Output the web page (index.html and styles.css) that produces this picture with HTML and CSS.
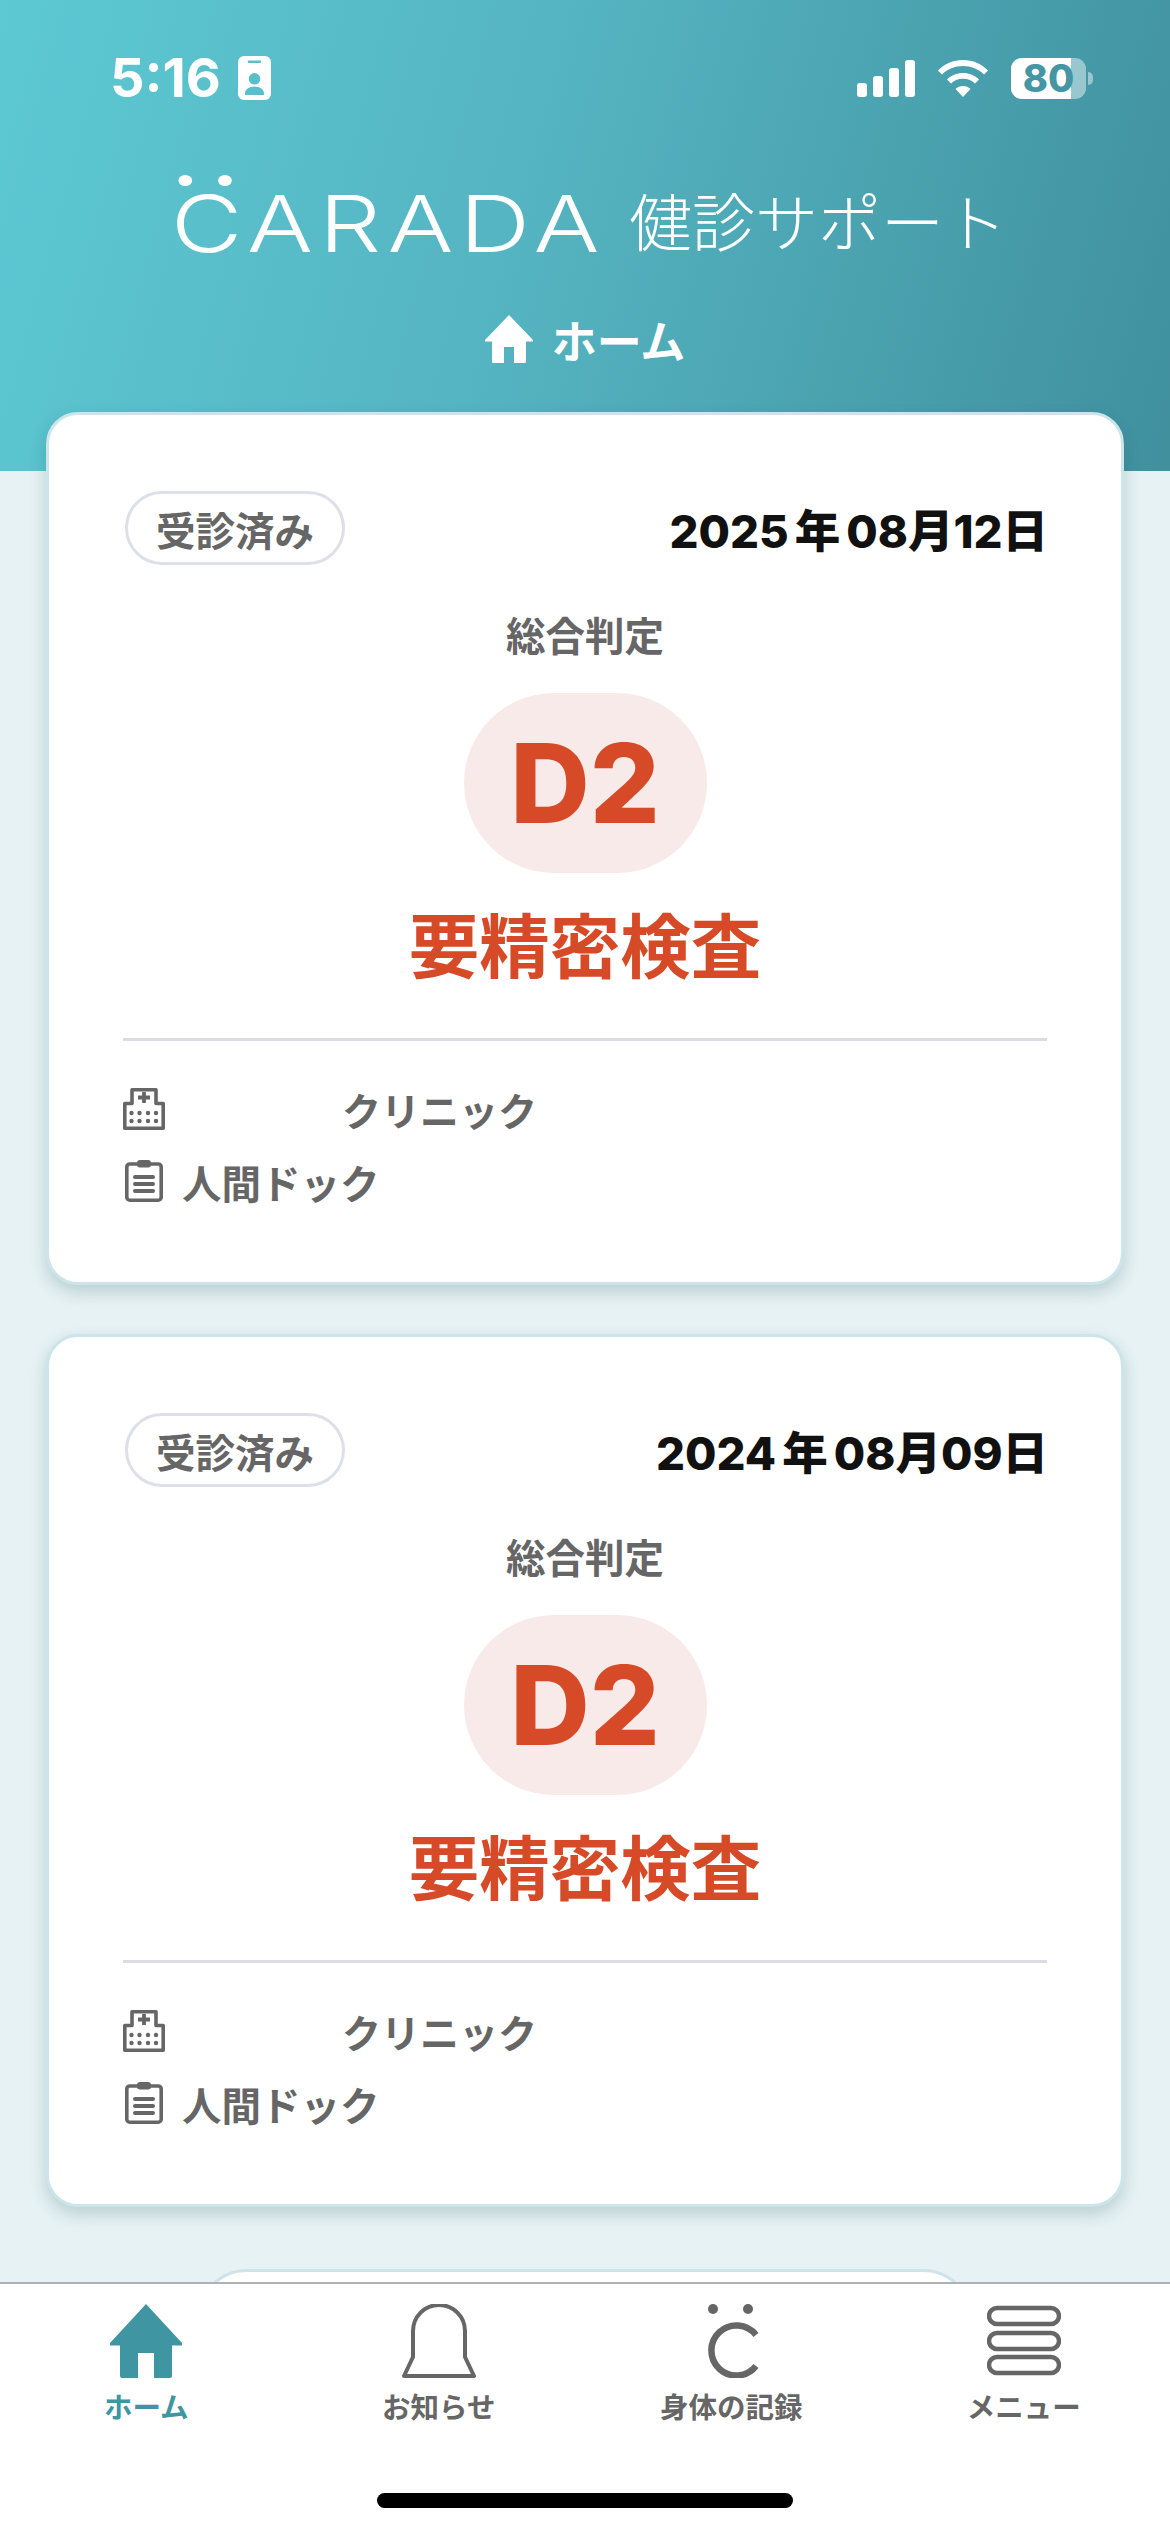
FILE: index.html
```html
<!DOCTYPE html>
<html lang="ja">
<head>
    <meta charset="UTF-8">
    <meta name="viewport" content="width=device-width, initial-scale=1.0">
    <title>CARADA 健診サポート</title>
    <link rel="stylesheet" href="styles.css">
</head>
<body>
    <header class="top">
        <div class="status">
            <div class="status-left">
                <span class="time">5:16</span>
                <svg class="id-icon" viewBox="0 0 33 44">
                    <path fill="#fff" fill-rule="evenodd" d="M6 0H27A6 6 0 0 1 33 6V38A6 6 0 0 1 27 44H6A6 6 0 0 1 0 38V6A6 6 0 0 1 6 0ZM11 4.500A1.200 1.200 0 0 0 11 7H22A1.200 1.200 0 0 0 22 4.500ZM16.500 17A5.800 5.800 0 1 0 16.500 28.600A5.800 5.800 0 1 0 16.500 17ZM16.500 30.500C11 30.500 7 33.500 7 37.500V39H26V37.500C26 33.500 22 30.500 16.500 30.500Z"/>
                </svg>
            </div>
            <div class="status-right">
                <svg class="signal" viewBox="0 0 58 37">
                    <rect x="0" y="23" width="10" height="14" rx="3" fill="#fff"/>
                    <rect x="16" y="16" width="10" height="21" rx="3" fill="#fff"/>
                    <rect x="32" y="8" width="10" height="29" rx="3" fill="#fff"/>
                    <rect x="48" y="0" width="10" height="37" rx="3" fill="#fff"/>
                </svg>
                <svg class="wifi" viewBox="0 0 50 37">
                    <path fill="#fff" d="M25 0C35 0 43.500 4 50 10.500L46 14.500C40.500 9 33 6 25 6S9.500 9 4 14.500L0 10.500C6.500 4 15 0 25 0Z"/>
                    <path fill="#fff" d="M25 13C31.500 13 37 15.500 41 19.500L37 23.500C34 20.500 30 18.800 25 18.800S16 20.500 13 23.500L9 19.500C13 15.500 18.500 13 25 13Z"/>
                    <path fill="#fff" d="M25 26C28 26 30.500 27 32.500 29L25 37L17.500 29C19.500 27 22 26 25 26Z"/>
                </svg>
                <div class="battery">
                    <div class="battery-body">
                        <div class="battery-fill"></div>
                        <span class="battery-num">80</span>
                    </div>
                    <span class="battery-tip"></span>
                </div>
            </div>
        </div>
        <div class="logo-row">
            <span class="logo"><span class="logo-dots"></span>CARADA</span>
            <span class="logo-sub">健診サポート</span>
        </div>
        <div class="page-title">
            <svg class="title-home" viewBox="0 0 48 48">
                <path fill="#fff" d="M24 0L48 25V26.500H41V47A1 1 0 0 1 40 48H29V32H19V48H8A1 1 0 0 1 7 47V26.500H0V25Z"/>
            </svg>
            <span>ホーム</span>
        </div>
    </header>

    <main class="list">
        <section class="card">
            <div class="card-head">
                <span class="pill">受診済み</span>
                <span class="date">2025<span class="unit">年</span>08月12日</span>
            </div>
            <div class="judge-label">総合判定</div>
            <div class="grade">D2</div>
            <div class="judge">要精密検査</div>
            <hr class="line">
            <div class="info">
                <svg class="ico-hospital" viewBox="0 0 42 42">
                    <path fill="none" stroke="#666" stroke-width="3.600" stroke-linejoin="round" d="M9 15.500V1.800H33V15.500H40.200V40.200H1.800V15.500Z"/>
                    <path fill="none" stroke="#666" stroke-width="3.800" d="M15 9.500H27M21 4V15"/>
                    <g fill="#666">
                        <circle cx="8.500" cy="25" r="2.200"/><circle cx="16.500" cy="25" r="2.200"/><circle cx="25" cy="25" r="2.200"/><circle cx="33" cy="25" r="2.200"/>
                        <circle cx="8.500" cy="33" r="2.200"/><circle cx="16.500" cy="33" r="2.200"/><circle cx="25" cy="33" r="2.200"/><circle cx="33" cy="33" r="2.200"/>
                    </g>
                </svg>
                <span class="masked"></span>
                <span class="clinic">クリニック</span>
            </div>
            <div class="info info-next">
                <svg class="ico-clip" viewBox="0 0 38 42">
                    <rect x="1.800" y="4" width="34.400" height="36.200" rx="3" fill="none" stroke="#666" stroke-width="3.600"/>
                    <rect x="12" y="0" width="14" height="7.500" rx="3" fill="#666"/>
                    <path stroke="#666" stroke-width="4" stroke-linecap="round" d="M10 17H28M10 24H28M10 31H28"/>
                </svg>
                <span>人間ドック</span>
            </div>
        </section>

        <section class="card">
            <div class="card-head">
                <span class="pill">受診済み</span>
                <span class="date">2024<span class="unit">年</span>08月09日</span>
            </div>
            <div class="judge-label">総合判定</div>
            <div class="grade">D2</div>
            <div class="judge">要精密検査</div>
            <hr class="line">
            <div class="info">
                <svg class="ico-hospital" viewBox="0 0 42 42">
                    <path fill="none" stroke="#666" stroke-width="3.600" stroke-linejoin="round" d="M9 15.500V1.800H33V15.500H40.200V40.200H1.800V15.500Z"/>
                    <path fill="none" stroke="#666" stroke-width="3.800" d="M15 9.500H27M21 4V15"/>
                    <g fill="#666">
                        <circle cx="8.500" cy="25" r="2.200"/><circle cx="16.500" cy="25" r="2.200"/><circle cx="25" cy="25" r="2.200"/><circle cx="33" cy="25" r="2.200"/>
                        <circle cx="8.500" cy="33" r="2.200"/><circle cx="16.500" cy="33" r="2.200"/><circle cx="25" cy="33" r="2.200"/><circle cx="33" cy="33" r="2.200"/>
                    </g>
                </svg>
                <span class="masked"></span>
                <span class="clinic">クリニック</span>
            </div>
            <div class="info info-next">
                <svg class="ico-clip" viewBox="0 0 38 42">
                    <rect x="1.800" y="4" width="34.400" height="36.200" rx="3" fill="none" stroke="#666" stroke-width="3.600"/>
                    <rect x="12" y="0" width="14" height="7.500" rx="3" fill="#666"/>
                    <path stroke="#666" stroke-width="4" stroke-linecap="round" d="M10 17H28M10 24H28M10 31H28"/>
                </svg>
                <span>人間ドック</span>
            </div>
        </section>

        <div class="more"></div>
    </main>

    <nav class="tabs">
        <div class="tab tab-on">
            <svg class="tab-icon" viewBox="0 0 74 74">
                <path fill="#4095a3" d="M37 0L73 39V41.500H63V72A2 2 0 0 1 61 74H45V49H29V74H13A2 2 0 0 1 11 72V41.500H1V39Z"/>
            </svg>
            <span>ホーム</span>
        </div>
        <div class="tab">
            <svg class="tab-icon" viewBox="0 0 74 74">
                <path fill="none" stroke="#666" stroke-width="4" stroke-linejoin="round" d="M11 53V27A26 26 0 0 1 63 27V53L72 72H2Z"/>
            </svg>
            <span>お知らせ</span>
        </div>
        <div class="tab">
            <svg class="tab-icon" viewBox="0 0 74 74">
                <circle cx="19" cy="5" r="5" fill="#666"/>
                <circle cx="54" cy="5" r="5" fill="#666"/>
                <path fill="none" stroke="#666" stroke-width="6.500" d="M62 31A25 25 0 1 0 62 62"/>
            </svg>
            <span>身体の記録</span>
        </div>
        <div class="tab">
            <svg class="tab-icon" viewBox="0 0 74 74">
                <g fill="none" stroke="#666" stroke-width="4.500">
                    <rect x="2" y="4" width="70" height="16" rx="8"/>
                    <rect x="2" y="29" width="70" height="16" rx="8"/>
                    <rect x="2" y="53" width="70" height="16" rx="8"/>
                </g>
            </svg>
            <span>メニュー</span>
        </div>
        <div class="home-bar"></div>
    </nav>
</body>
</html>
```

FILE: styles.css
```css
html, body {
    margin: 0;
    padding: 0;
}

body {
    width: 1170px;
    height: 2532px;
    overflow: hidden;
    position: relative;
    background-color: #e6f2f4;
    font-family: Inter, "Noto Sans CJK JP", sans-serif;
}

.top {
    height: 471px;
    box-sizing: border-box;
    padding-top: 50px;
    color: #fff;
    background: linear-gradient(105deg, #5cc9d3 0%, #55b4c1 45%, #40909e 100%);
}

.status {
    height: 56px;
    padding: 0 77px 0 110px;
    display: flex;
    justify-content: space-between;
    align-items: center;
}

.status-left {
    display: flex;
    align-items: center;
    gap: 17px;
}

.time {
    font-size: 54px;
    font-weight: 700;
    line-height: 56px;
}

.id-icon {
    width: 33px;
    height: 44px;
}

.status-right {
    display: flex;
    align-items: center;
    gap: 23px;
}

.signal {
    width: 58px;
    height: 37px;
}

.wifi {
    width: 50px;
    height: 37px;
}

.battery {
    display: flex;
    align-items: center;
    gap: 2px;
}

.battery-body {
    width: 75px;
    height: 41px;
    border-radius: 11px;
    position: relative;
    background-color: rgba(255, 255, 255, 0.45);
    display: flex;
    justify-content: center;
    align-items: center;
}

.battery-fill {
    position: absolute;
    left: 0;
    top: 0;
    bottom: 0;
    width: 60px;
    border-radius: 11px 0 0 11px;
    background-color: #fff;
}

.battery-num {
    position: relative;
    font-size: 38px;
    font-weight: 800;
    line-height: 41px;
    color: #4596a4;
}

.battery-tip {
    width: 5px;
    height: 13px;
    border-radius: 0 6px 6px 0;
    background-color: rgba(255, 255, 255, 0.45);
}

.logo-row {
    margin-top: 82px;
    padding-left: 171px;
    display: flex;
    align-items: center;
    height: 70px;
}

.logo {
    position: relative;
    width: 424px;
    margin-right: 34px;
    font-family: Inter, sans-serif;
    font-weight: 300;
    font-size: 79px;
    line-height: 70px;
    letter-spacing: 5px;
    white-space: nowrap;
    transform: scaleX(1.24);
    transform-origin: left center;
}

/* .logoのscaleXがかかるので幅は1.24で割った値 */
.logo-dots {
    position: absolute;
    left: 6px;
    top: -13px;
    width: 43px;
    height: 11px;
    display: flex;
    justify-content: space-between;
}

.logo-dots::before,
.logo-dots::after {
    content: "";
    width: 11px;
    height: 11px;
    border-radius: 50%;
    background-color: #fff;
}

.logo-sub {
    margin-bottom: 8px;
    font-family: "Noto Sans CJK JP", sans-serif;
    font-weight: 300;
    font-size: 63px;
    line-height: 70px;
}

.page-title {
    margin-top: 56px;
    display: flex;
    justify-content: center;
    align-items: center;
    gap: 19px;
    height: 50px;
    font-size: 45px;
    font-weight: 700;
}

.title-home {
    width: 48px;
    height: 48px;
}

.list {
    margin-top: -59px;
    padding: 0 46px;
    display: flex;
    flex-direction: column;
    gap: 49px;
}

.card {
    height: 873px;
    box-sizing: border-box;
    padding: 76px 77px 0;
    background-color: #fff;
    border: 3px solid #cbe5ea;
    border-radius: 32px;
    box-shadow: 0 7px 16px rgba(30, 80, 90, 0.22);
}

.card-head {
    display: flex;
    justify-content: space-between;
    align-items: center;
}

.pill {
    width: 220px;
    height: 74px;
    margin-left: -1px;
    box-sizing: border-box;
    border: 3px solid #dfdfe9;
    border-radius: 37px;
    display: flex;
    justify-content: center;
    align-items: center;
    font-size: 39.500px;
    font-weight: 700;
    color: #666;
}

.date {
    margin-right: -4px;
    font-size: 45.500px;
    font-weight: 800;
    color: #111;
}

.unit {
    margin: 0 6px;
}

.judge-label {
    margin-top: 49px;
    text-align: center;
    font-size: 39.500px;
    line-height: 46px;
    font-weight: 700;
    color: #666;
}

.grade {
    width: 243px;
    height: 180px;
    margin: 33px auto 0;
    border-radius: 90px;
    background-color: #f8eae8;
    color: #d64a27;
    font-size: 110px;
    font-weight: 800;
    line-height: 180px;
    text-align: center;
}

.judge {
    margin-top: 35px;
    text-align: center;
    font-size: 70.500px;
    line-height: 80px;
    font-weight: 700;
    color: #d64a27;
}

.line {
    margin: 50px -3px 0;
    height: 3px;
    border: none;
    background-color: #dcdce8;
}

.info {
    margin: 45px 0 0 -3px;
    height: 46px;
    display: flex;
    align-items: center;
    font-size: 39.500px;
    font-weight: 700;
    color: #666;
}

.info-next {
    margin-top: 26px;
}

.clinic {
    font-size: 39px;
}

.ico-hospital {
    width: 42px;
    height: 42px;
    margin-right: 19px;
}

.ico-clip {
    width: 38px;
    height: 42px;
    margin: 0 19px 0 2px;
}

/* 施設名は元画像で隠されている */
.masked {
    width: 158px;
}

.more {
    width: 776px;
    height: 120px;
    margin: 13px auto 0;
    box-sizing: border-box;
    background-color: #fff;
    border: 3px solid #cbe5ea;
    border-radius: 50px;
}

.tabs {
    position: absolute;
    left: 0;
    right: 0;
    bottom: 0;
    height: 250px;
    box-sizing: border-box;
    padding-top: 20px;
    border-top: 2px solid #aeb2b3;
    background-color: #fff;
    display: grid;
    grid-template-columns: repeat(4, 1fr);
    align-content: start;
}

.tab {
    display: flex;
    flex-direction: column;
    align-items: center;
    gap: 14px;
    font-size: 28.500px;
    line-height: 32px;
    font-weight: 700;
    color: #666;
}

.tab-on {
    color: #4095a3;
}

.tab-icon {
    width: 74px;
    height: 74px;
}

.home-bar {
    position: absolute;
    left: 377px;
    bottom: 24px;
    width: 416px;
    height: 15px;
    border-radius: 8px;
    background-color: #000;
}
```
